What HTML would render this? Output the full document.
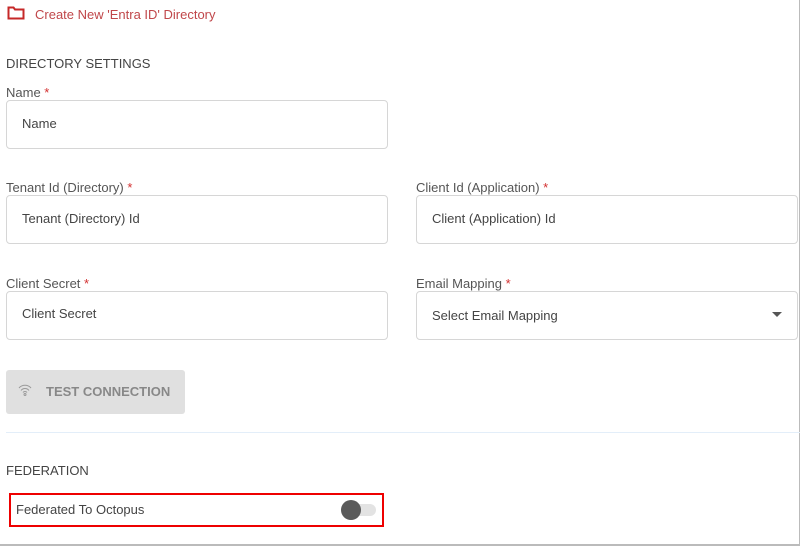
<html><head><style>
body{margin:0;width:800px;height:546px;position:relative;background:#fff;font-family:"Liberation Sans",sans-serif;overflow:hidden}
.a{position:absolute}
.lbl{position:absolute;font-size:13px;color:#555}
.lbl b{color:#d32f2f;font-weight:normal}
.in{position:absolute;border:1px solid #d6d6d6;border-radius:4px;box-sizing:border-box;font-size:13px;color:#444;padding-left:15px;line-height:46px}
</style></head><body>
<div class="a" style="right:0;top:0;width:1px;height:546px;background:#bbb"></div>
<div class="a" style="left:0;bottom:0;width:800px;height:2px;background:#bbb"></div>
<svg class="a" style="left:7px;top:6px" width="18" height="14" viewBox="0 0 18 14"><path d="M1.5 1.5h5l1.5 2h8.5v9h-15z" fill="none" stroke="#c62828" stroke-width="2"/></svg>
<div class="a" style="left:35px;top:7px;font-size:13px;color:#c0474a">Create New 'Entra ID' Directory</div>
<div class="a" style="left:6px;top:56px;font-size:13px;color:#444">DIRECTORY SETTINGS</div>
<div class="lbl" style="left:6px;top:85px">Name <b>*</b></div>
<div class="in" style="left:6px;top:100px;width:382px;height:49px">Name</div>
<div class="lbl" style="left:6px;top:180px">Tenant Id (Directory) <b>*</b></div>
<div class="in" style="left:6px;top:195px;width:382px;height:49px">Tenant (Directory) Id</div>
<div class="lbl" style="left:416px;top:180px">Client Id (Application) <b>*</b></div>
<div class="in" style="left:416px;top:195px;width:382px;height:49px">Client (Application) Id</div>
<div class="lbl" style="left:6px;top:276px">Client Secret <b>*</b></div>
<div class="in" style="left:6px;top:291px;width:382px;height:49px;line-height:44px">Client Secret</div>
<div class="lbl" style="left:416px;top:276px">Email Mapping <b>*</b></div>
<div class="in" style="left:416px;top:291px;width:382px;height:49px;line-height:48px">Select Email Mapping</div>
<div class="a" style="left:772px;top:312px;width:0;height:0;border-left:5px solid transparent;border-right:5px solid transparent;border-top:5px solid #555"></div>
<div class="a" style="left:6px;top:370px;width:179px;height:44px;background:#e0e0e0;border-radius:3px"></div>
<svg class="a" style="left:18px;top:384px" width="14" height="12" viewBox="0 0 14 12"><path d="M1 4a8 8 0 0 1 12 0M3 6.5a5 5 0 0 1 8 0M5 8.5a2.5 2.5 0 0 1 4 0" fill="none" stroke="#999" stroke-width="1"/><circle cx="7" cy="10.5" r="1" fill="none" stroke="#999"/></svg>
<div class="a" style="left:46px;top:384px;font-size:13px;font-weight:bold;color:#888">TEST CONNECTION</div>
<div class="a" style="left:6px;top:432px;width:794px;height:1px;background:#e3eef9"></div>
<div class="a" style="left:6px;top:463px;font-size:13px;color:#444">FEDERATION</div>
<div class="a" style="left:9px;top:493px;width:375px;height:34px;border:2px solid #e00;box-sizing:border-box"></div>
<div class="a" style="left:16px;top:502px;font-size:13px;color:#444">Federated To Octopus</div>
<div class="a" style="left:343px;top:504px;width:33px;height:12px;border-radius:6px;background:#e3e3e3"></div>
<div class="a" style="left:341px;top:500px;width:20px;height:20px;border-radius:50%;background:#5a5a5a"></div>
</body></html>
